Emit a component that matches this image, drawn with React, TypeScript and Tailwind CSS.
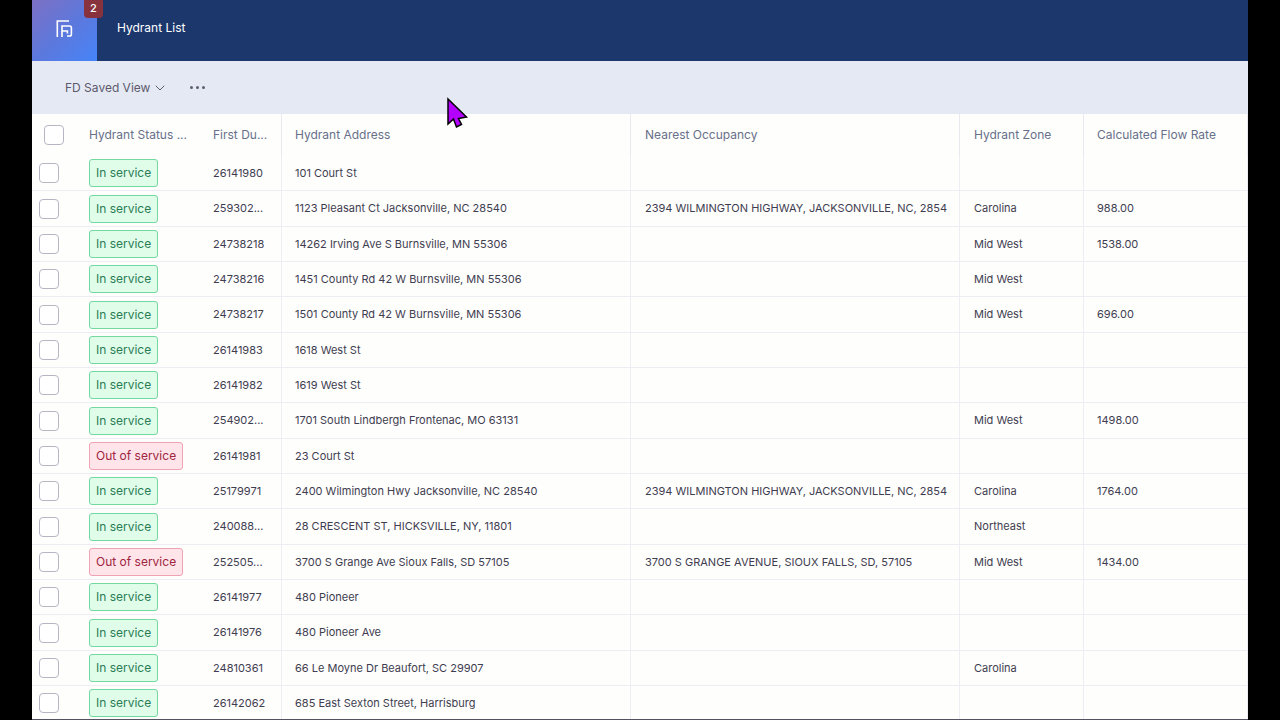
import clsx from "clsx";
import { ChevronDown } from "lucide-react";
import React from "react";

type Hydrant = {
  due: string;
  address: string;
  occupancy?: string;
  zone?: string;
  flow?: string;
  out?: boolean;
};

const hydrants: Hydrant[] = [
  { due: "26141980", address: "101 Court St" },
  { due: "259302...", address: "1123 Pleasant Ct Jacksonville, NC 28540", occupancy: "2394 WILMINGTON HIGHWAY, JACKSONVILLE, NC, 2854", zone: "Carolina", flow: "988.00" },
  { due: "24738218", address: "14262 Irving Ave S Burnsville, MN 55306", zone: "Mid West", flow: "1538.00" },
  { due: "24738216", address: "1451 County Rd 42 W Burnsville, MN 55306", zone: "Mid West" },
  { due: "24738217", address: "1501 County Rd 42 W Burnsville, MN 55306", zone: "Mid West", flow: "696.00" },
  { due: "26141983", address: "1618 West St" },
  { due: "26141982", address: "1619 West St" },
  { due: "254902...", address: "1701 South Lindbergh Frontenac, MO 63131", zone: "Mid West", flow: "1498.00" },
  { due: "26141981", address: "23 Court St", out: true },
  { due: "25179971", address: "2400 Wilmington Hwy Jacksonville, NC 28540", occupancy: "2394 WILMINGTON HIGHWAY, JACKSONVILLE, NC, 2854", zone: "Carolina", flow: "1764.00" },
  { due: "240088...", address: "28 CRESCENT ST, HICKSVILLE, NY, 11801", zone: "Northeast" },
  { due: "252505...", address: "3700 S Grange Ave Sioux Falls, SD 57105", occupancy: "3700 S GRANGE AVENUE, SIOUX FALLS, SD, 57105", zone: "Mid West", flow: "1434.00", out: true },
  { due: "26141977", address: "480 Pioneer" },
  { due: "26141976", address: "480 Pioneer Ave" },
  { due: "24810361", address: "66 Le Moyne Dr Beaufort, SC 29907", zone: "Carolina" },
  { due: "26142062", address: "685 East Sexton Street, Harrisburg" },
];

const Logo = () => (
  <svg width="18" height="18" viewBox="0 0 18 18" fill="none" stroke="white" strokeWidth="1.6">
    <path d="M1.3 17V1H13" />
    <path d="M6 17V6H13.6Q15.4 6 15.4 7.8V14.2Q15.4 16 13.6 16H11" />
    <path d="M6 11H11.4V13.5" />
  </svg>
);

const Checkbox = ({ label }: { label: string }) => (
  <input
    type="checkbox"
    aria-label={label}
    className="block size-5 appearance-none rounded border border-[#b9b4c4] bg-white checked:bg-[#4682f4]"
  />
);

const StatusBadge = ({ out }: { out?: boolean }) => (
  <span
    className={clsx(
      "inline-block h-7 rounded-[3px] border px-1.5 align-middle text-xs leading-[26px]",
      out
        ? "border-[#f0a3b2] bg-[#ffe4ea] text-[#a02540]"
        : "border-[#74d8a0] bg-[#e0fdea] text-[#2a7c55]"
    )}
  >
    {out ? "Out of service" : "In service"}
  </span>
);

const App = () => {
  return (
    <div className="h-screen bg-black px-8 font-['Inter',sans-serif] text-xs">
      <div className="flex h-full flex-col overflow-hidden border-b border-[#55525f] bg-[#fefefd]">
        {/* Header */}
        <header className="flex h-[61px] shrink-0 bg-[#1c376c] text-white">
          <a
            href="#"
            aria-label="Home"
            className="relative flex w-[65px] justify-center bg-linear-to-br from-[#7c70c4] via-[#5c78dc] to-[#4484f8] pt-5"
          >
            <Logo />
            <span className="absolute top-0 -right-1.5 flex h-[18px] w-[19px] items-center justify-center rounded-b-[4px] bg-[#88323e] pb-0.5 text-[11px] font-medium">
              2
            </span>
          </a>
          <h1 className="px-5 pt-5">Hydrant List</h1>
        </header>

        {/* Toolbar */}
        <div className="relative flex h-[53px] shrink-0 items-center gap-[22px] bg-[#e5e9f4] px-[33px] text-[#5c5a6c]">
          <button type="button" className="flex items-center gap-0.5">
            FD Saved View
            <ChevronDown size={16} strokeWidth={1.5} />
          </button>
          <button type="button" aria-label="More actions" className="flex gap-[3px]">
            {[0, 1, 2].map((dot) => (
              <span key={dot} className="size-[3px] rounded-full bg-[#5f5d72]" />
            ))}
          </button>

          {/* Pointer */}
          <svg className="absolute top-9 left-[414px]" width="24" height="34" viewBox="0 0 24 34">
            <path
              d="M2 2V27L7.5 22L10.5 30L15.5 27.5L12.5 21.5L20.5 20Z"
              fill="#b400ff"
              stroke="black"
              strokeWidth="1.5"
            />
          </svg>
        </div>

        {/* Hydrants */}
        <div className="flex-1 overflow-hidden">
          <table className="w-full table-fixed border-separate border-spacing-0 text-left whitespace-nowrap text-[#3f3d50]">
            <colgroup>
              <col className="w-[43px]" />
              <col className="w-[124px]" />
              <col className="w-[83px]" />
              <col className="w-[349px]" />
              <col className="w-[329px]" />
              <col className="w-[124px]" />
              <col />
            </colgroup>
            <thead className="text-[#68708a]">
              <tr className="h-[42px] *:p-0 *:font-normal">
                <th>
                  <div className="pl-3">
                    <Checkbox label="Select all hydrants" />
                  </div>
                </th>
                <th><div className="pl-3.5">Hydrant Status ...</div></th>
                <th className="border-r border-[#e9e8f0]"><div className="pl-3.5">First Du...</div></th>
                <th className="border-r border-[#e9e8f0]"><div className="pl-[13px]">Hydrant Address</div></th>
                <th className="border-r border-[#e9e8f0]"><div className="pl-3.5">Nearest Occupancy</div></th>
                <th className="border-r border-[#e9e8f0]"><div className="pl-3.5">Hydrant Zone</div></th>
                <th className="border-r border-[#e9e8f0]"><div className="pl-[13px]">Calculated Flow Rate</div></th>
              </tr>
            </thead>
            <tbody className="text-[11px]">
              {hydrants.map((hydrant) => (
                <tr
                  key={hydrant.due + hydrant.address}
                  className="h-[35px] *:border-b *:border-[#eeedf3] *:p-0 nth-[3n+2]:h-9"
                >
                  <td>
                    <div className="pl-[7px]">
                      <Checkbox label={`Select ${hydrant.address}`} />
                    </div>
                  </td>
                  <td><div className="pl-3.5"><StatusBadge out={hydrant.out} /></div></td>
                  <td className="border-r"><div className="pl-3.5">{hydrant.due}</div></td>
                  <td className="border-r"><div className="overflow-hidden pl-[13px]">{hydrant.address}</div></td>
                  <td className="border-r"><div className="overflow-hidden pl-3.5">{hydrant.occupancy}</div></td>
                  <td className="border-r"><div className="pl-3.5">{hydrant.zone}</div></td>
                  <td className="border-r"><div className="pl-[13px]">{hydrant.flow}</div></td>
                </tr>
              ))}
            </tbody>
          </table>
        </div>
      </div>
    </div>
  );
};

export default App;
